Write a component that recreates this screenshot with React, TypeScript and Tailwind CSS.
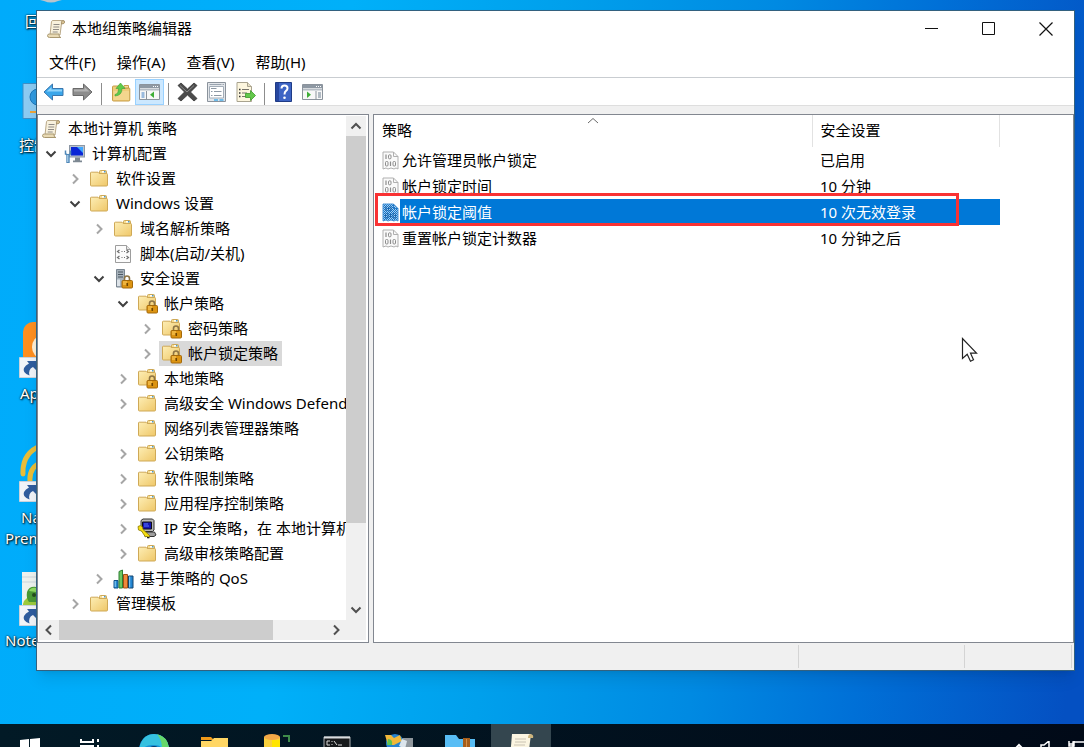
import { ReactNode } from "react"

type IconName = "scroll" | "computer" | "folder" | "lockFolder" | "script" | "server" | "ipsec" | "chart"

interface TreeNode {
  label: string
  depth: number
  icon: IconName
  state?: "open" | "closed"
  selected?: boolean
}

const tree: TreeNode[] = [
  { label: "本地计算机 策略", depth: 0, icon: "scroll" },
  { label: "计算机配置", depth: 1, icon: "computer", state: "open" },
  { label: "软件设置", depth: 2, icon: "folder", state: "closed" },
  { label: "Windows 设置", depth: 2, icon: "folder", state: "open" },
  { label: "域名解析策略", depth: 3, icon: "folder", state: "closed" },
  { label: "脚本(启动/关机)", depth: 3, icon: "script" },
  { label: "安全设置", depth: 3, icon: "server", state: "open" },
  { label: "帐户策略", depth: 4, icon: "lockFolder", state: "open" },
  { label: "密码策略", depth: 5, icon: "lockFolder", state: "closed" },
  { label: "帐户锁定策略", depth: 5, icon: "lockFolder", state: "closed", selected: true },
  { label: "本地策略", depth: 4, icon: "lockFolder", state: "closed" },
  { label: "高级安全 Windows Defender", depth: 4, icon: "folder", state: "closed" },
  { label: "网络列表管理器策略", depth: 4, icon: "folder" },
  { label: "公钥策略", depth: 4, icon: "folder", state: "closed" },
  { label: "软件限制策略", depth: 4, icon: "folder", state: "closed" },
  { label: "应用程序控制策略", depth: 4, icon: "folder", state: "closed" },
  { label: "IP 安全策略，在 本地计算机", depth: 4, icon: "ipsec", state: "closed" },
  { label: "高级审核策略配置", depth: 4, icon: "folder", state: "closed" },
  { label: "基于策略的 QoS", depth: 3, icon: "chart", state: "closed" },
  { label: "管理模板", depth: 2, icon: "folder", state: "closed" },
]

const policies = [
  { name: "允许管理员帐户锁定", value: "已启用" },
  { name: "帐户锁定时间", value: "10 分钟" },
  { name: "帐户锁定阈值", value: "10 次无效登录", selected: true },
  { name: "重置帐户锁定计数器", value: "10 分钟之后" },
]

const indents = ["pl-0", "pl-0", "pl-6", "pl-12", "pl-18", "pl-24"]

function ScrollIcon() {
  return (
    <svg width="20" height="20" viewBox="0 0 20 20">
      <path d="M5.5 2.5Q6 1.5 7 1.5H17q1.5 0 1.5 1.5t-1.5 1.5h-1.5L14 16H4z" fill="#f8f1dd" stroke="#b9a888" />
      <path d="M15.5 5q-1-3 1.5-3.5 2 .3 1.5 2-.5 1.5-3 1.5z" fill="#d9c394" stroke="#a08c64" strokeWidth=".8" />
      <path d="M1.5 16.5q0-1.500 2-1.500h9.500v1q0 2.500 2 2.500H3.500q-2 0-2-2z" fill="#e9dab4" stroke="#a99870" />
      <path d="M7.500 5.500h6M7.300 8h6M7 10.500h6M6.700 13h5" stroke="#8f8b86" strokeWidth="1" />
    </svg>
  )
}

function FolderShape() {
  return (
    <>
      <defs>
        <linearGradient id="folder" x1="0" y1="0" x2="1" y2="1">
          <stop offset="0" stopColor="#fdeeb5" />
          <stop offset="1" stopColor="#efc768" />
        </linearGradient>
      </defs>
      <path d="M10.500 4V2.500q0-1 1-1h5q1 0 1 1V5h-7z" fill="#f5dc92" stroke="#cda856" />
      <path d="M13 2.800h3" stroke="#fff" strokeWidth="1.500" />
      <path d="M15 2.800h1.500" stroke="#4a9ad4" strokeWidth="1.500" />
      <path d="M1.500 4q0-.8.8-.8H9l1.200 1.300h7.300q1 0 1 1V16q0 1-1 1h-15q-1 0-1-1z" fill="url(#folder)" stroke="#cfa957" />
    </>
  )
}

function TreeIcon({ name }: { name: IconName }) {
  if (name === "scroll") return <ScrollIcon />
  if (name === "folder") {
    return (
      <svg width="20" height="19" viewBox="0 0 20 19"><FolderShape /></svg>
    )
  }
  if (name === "lockFolder") {
    return (
      <svg width="21" height="21" viewBox="0 0 21 21">
        <FolderShape />
        <path d="M12.500 13v-2.500q0-2.500 2.500-2.500t2.500 2.500V13" fill="none" stroke="#8d7444" strokeWidth="1.600" />
        <rect x="10" y="12.500" width="10.500" height="7.500" rx="1" fill="#dc9412" stroke="#a4690a" />
        <path d="M11 14h4M11 16h3" stroke="#ffd36b" />
        <path d="M15.300 15v3" stroke="#6d4504" strokeWidth="1.500" />
      </svg>
    )
  }
  if (name === "computer") {
    return (
      <svg width="22" height="20" viewBox="0 0 22 20">
        <rect x="5.500" y="1.500" width="15" height="11.500" fill="#b9c3cf" stroke="#8c97a5" />
        <rect x="7" y="3" width="12" height="8.500" fill="#0a26d6" />
        <path d="M13 3h6v6z" fill="#3fa7ff" />
        <path d="M11 13.500h5v3h-5zM9 16.500h9v1.800H9z" fill="#7d8892" />
        <path d="M1.500 6.500v3.500l2.500 1 2.500-1V6.500" fill="none" stroke="#4f87b8" strokeWidth="1.500" />
        <path d="M4 10.500v8.500" stroke="#4f87b8" strokeWidth="3.400" />
        <path d="M3.800 11v7" stroke="#c4e2f5" />
      </svg>
    )
  }
  if (name === "script") {
    return (
      <svg width="18" height="20" viewBox="0 0 18 20">
        <path d="M1.500 1.500h11l4 4v13h-15z" fill="#fcfcfc" stroke="#9d9d9d" />
        <path d="M12.500 1.500v4h4" fill="#e5e5e5" stroke="#9d9d9d" />
        <path d="M5.500 6 3.500 7.500l2 1.500M12.500 6l2 1.500-2 1.500M7.500 7.500h1M10 7.500h1M5.500 12l-2 1.500 2 1.500M12.500 12l2 1.500-2 1.500M7.500 13.500h1M10 13.500h1" fill="none" stroke="#6f6f6f" strokeWidth="1.200" />
      </svg>
    )
  }
  if (name === "server") {
    return (
      <svg width="19" height="21" viewBox="0 0 19 21">
        <path d="M2.500 1.500h8V19h-8z" fill="#a7b2bb" stroke="#798590" />
        <path d="M4 4h5M4 6.500h5M4 9h5" stroke="#4c5863" strokeWidth="1.200" />
        <path d="M3 11.500h3V18H3z" fill="#dde3e8" />
        <path d="M10.500 13v-2.500q0-2.500 2.500-2.500t2.500 2.500V13" fill="none" stroke="#8d7444" strokeWidth="1.600" />
        <rect x="8" y="12.500" width="10.500" height="7.500" rx="1" fill="#dc9412" stroke="#a4690a" />
        <path d="M9 14h4M9 16h3" stroke="#ffd36b" />
        <path d="M13.300 15v3" stroke="#6d4504" strokeWidth="1.500" />
      </svg>
    )
  }
  if (name === "ipsec") {
    return (
      <svg width="20" height="21" viewBox="0 0 20 21">
        <path d="M4 2.500 6 1h9.500l1.500 1.500V12l-1.500 1.500H5L4 12z" fill="#b8b8b8" stroke="#333" />
        <path d="M5.500 4h9v7h-9z" fill="#1515b5" stroke="#111" />
        <path d="M7 6h4M7 8h5" stroke="#5d7aff" />
        <path d="M7 14h10.500l1.500 3-2 1.500H8z" fill="#9f9f9f" stroke="#333" />
        <path d="M1 8.500q2.500-2 4.500.5l.5 2.500 7 6.500-1.500 1.800-2-1.300-1 .5L4.500 13 1.500 12z" fill="#f5df12" stroke="#8e7a00" strokeWidth=".8" />
        <path d="M10 19.500h2.500" stroke="#222" strokeWidth="1.500" />
      </svg>
    )
  }
  return (
    <svg width="21" height="20" viewBox="0 0 21 20">
      <path d="M1 11.500h4V19H1z" fill="#2587cf" stroke="#10508a" />
      <path d="M6 2.500 9.500 1v18H6z" fill="#6cc860" stroke="#2f7f35" />
      <path d="M10.500 5.500h4V19h-4z" fill="#f0893c" stroke="#a34e12" />
      <path d="M15.500 7h4.500v12h-4.500z" fill="#2284d0" stroke="#14456e" />
      <path d="M16.700 7.500v11M2.200 12v6" stroke="#8fd0f8" />
    </svg>
  )
}

function Chevron({ dir, className }: { dir: "up" | "down" | "left" | "right"; className: string }) {
  const paths = {
    up: "M1.500 8.500 6 4l4.500 4.500",
    down: "M1.500 3.500 6 8l4.500-4.500",
    left: "M8 1.500 3.500 6 8 10.500",
    right: "M4 1.500 8.500 6 4 10.500",
  }
  return (
    <svg width="12" height="12" viewBox="0 0 12 12" className={className}>
      <path d={paths[dir]} fill="none" stroke="currentColor" strokeWidth="2" />
    </svg>
  )
}

function TreeRow({ node }: { node: TreeNode }) {
  return (
    <li className={`flex h-[25px] items-center ${indents[node.depth]}`}>
      {node.depth > 0 && (
        <button aria-label={node.label} className="flex h-full w-6 shrink-0 items-center justify-center">
          {node.state === "open" && <Chevron dir="down" className="text-[#404040]" />}
          {node.state === "closed" && <Chevron dir="right" className="text-[#a6a6a6]" />}
        </button>
      )}
      <span className={`flex h-full items-center pr-1 ${node.selected ? "bg-[#d9d9d9]" : ""}`}>
        <span className="flex w-6 shrink-0 justify-center">
          <TreeIcon name={node.icon} />
        </span>
        <span className="pb-px pl-[5px] whitespace-nowrap">{node.label}</span>
      </span>
    </li>
  )
}

function ToolButton({ label, active, children }: { label: string; active?: boolean; children: ReactNode }) {
  return (
    <button
      aria-label={label}
      className={`flex h-[26px] w-[29px] items-center justify-center ${active ? "border border-[#99d1ff] bg-[#cce8ff]" : ""}`}
    >
      {children}
    </button>
  )
}

function ToolDivider() {
  return (
    <span className="flex w-[9px] justify-center">
      <span className="h-[22px] w-px bg-[#8d8d8d]" />
    </span>
  )
}

function PaneIcon({ flip }: { flip?: boolean }) {
  return (
    <svg width="21" height="18" viewBox="0 0 21 18">
      <path d="M.500 1.500h20v15H.500z" fill="#f7f7f7" stroke="#8b939c" />
      <path d="M1 2h19v3H1z" fill="#8e98a3" />
      <path d="M14 3.500h1M16 3.500h1M18 3.500h1" stroke="#fff" />
      <path d="M1 6.500h19" stroke="#b5bcc4" strokeWidth="2" />
      {flip ? (
        <>
          <path d="M14 8v8.500" stroke="#8b939c" />
          <path d="M16 10h3M16 12h3M16 14h3" stroke="#6d7e90" />
          <path d="M5 8.500v6.500l4-3.200z" fill="#3fae37" />
        </>
      ) : (
        <>
          <path d="M7.500 8v8.500" stroke="#8b939c" />
          <path d="M2.500 10h3M2.500 12h3M2.500 14h3" stroke="#3f7fc4" />
          <path d="M15 8.500v6.500l-4-3.200z" fill="#3fae37" />
        </>
      )}
    </svg>
  )
}

function Toolbar() {
  return (
    <div className="flex h-7 items-end border-b border-[#dedede] bg-white pl-[2px]">
      <ToolButton label="后退">
        <svg width="21" height="18" viewBox="0 0 21 18">
          <path d="M1 9 9.500 1v4.500h10.500v7H9.500V17z" fill="#3aa6ea" stroke="#3a76ad" />
          <path d="M3.500 8.500 8.500 4v2.500h10.500v2z" fill="#8fd3fa" />
        </svg>
      </ToolButton>
      <ToolButton label="前进">
        <svg width="21" height="18" viewBox="0 0 21 18">
          <path d="M20 9 11.500 1v4.500H1v7h10.500V17z" fill="#8d8d8d" stroke="#6a6a6a" />
          <path d="M17.500 8.500 12.500 4v2.500H2v2z" fill="#b3b3b3" />
        </svg>
      </ToolButton>
      <ToolDivider />
      <ToolButton label="上一级">
        <svg width="20" height="20" viewBox="0 0 20 20">
          <path d="M1.500 5q0-1 1-1H8l1.500 2H18q.8 0 .8 1v11q0 1-1 1H2.500q-1 0-1-1z" fill="#efcb78" stroke="#c79d48" />
          <path d="M13 3.500h4.500V6H13z" fill="#f4dca0" stroke="#c79d48" />
          <path d="M2.500 9h15.500v9H2.500z" fill="#f4d68e" />
          <path d="M4 12.500q3.500-.5 3.500-6H5L9.500 1 14 6.500h-3q0 7-7 7.500z" fill="#5ecb4a" stroke="#3fa035" strokeWidth=".6" />
        </svg>
      </ToolButton>
      <ToolButton label="显示/隐藏控制台树" active><PaneIcon /></ToolButton>
      <ToolDivider />
      <ToolButton label="删除">
        <svg width="21" height="20" viewBox="0 0 21 20">
          <path d="M1 3.500 4 1l6.500 6L17 1l3 2.500L13.500 10l6.500 6.500-3 2.500-6.500-6L4 19l-3-2.500L7.500 10z" fill="#4b4b4b" stroke="#333" strokeWidth=".8" />
          <path d="M3 3.500 10 10l7-6.500" fill="none" stroke="#8a8a8a" />
        </svg>
      </ToolButton>
      <ToolButton label="属性">
        <svg width="19" height="20" viewBox="0 0 19 20">
          <path d="M.500.500h18v19H.500z" fill="#e3e6ea" stroke="#8b939c" />
          <path d="M2.500 4.500h14V16h-14z" fill="#fff" stroke="#a3adb8" />
          <path d="M2.500 2.500h12M15.500 2.500h1.500" stroke="#9aa4af" />
          <path d="M4 6.500h5.500M4 9.500h1.500M7 9.500h7.500M4 13.500h1.500M7 13.500h7.500" stroke="#8d98a4" />
          <path d="M7 18h4M12.500 18h4" stroke="#4aaeea" strokeWidth="1.500" />
        </svg>
      </ToolButton>
      <ToolButton label="导出列表">
        <svg width="20" height="20" viewBox="0 0 20 20">
          <path d="M1 .500h10.500l4 4v15H1z" fill="#fdf6de" stroke="#a9a38f" />
          <path d="M11.500.500v4h4" fill="#e8e0c5" stroke="#a9a38f" />
          <path d="M3 7.500h1.500M3 11h1.500M3 14.500h1.500" stroke="#333" strokeWidth="1.500" />
          <path d="M6 7.500h7M6 11h5M6 14.500h5" stroke="#77736a" strokeWidth="1.200" />
          <path d="M9.500 11.500h5V8.500l5 5-5 5v-3h-5z" fill="#64c94c" stroke="#3c9a2c" strokeWidth=".8" />
        </svg>
      </ToolButton>
      <ToolDivider />
      <ToolButton label="帮助">
        <svg width="17" height="20" viewBox="0 0 17 20">
          <path d="M.500.500h16v19H.500z" fill="#3d64c4" stroke="#1f3b86" />
          <path d="M1 1h3v18H1z" fill="#27479f" />
          <path d="M6.500 6.500q0-3 3-3t3 2.700q0 1.600-1.500 2.600T9.500 12.500" fill="none" stroke="#fff" strokeWidth="2" />
          <circle cx="9.500" cy="15.800" r="1.300" fill="#fff" />
        </svg>
      </ToolButton>
      <ToolButton label="显示/隐藏操作窗格"><PaneIcon flip /></ToolButton>
    </div>
  )
}

function TreePane() {
  return (
    <div className="flex w-[332px] shrink-0 flex-col border border-[#828790] bg-white pt-px pr-[2px] pb-[2px] pl-px">
      <div className="flex min-h-0 flex-1">
        <ul className="min-w-0 flex-1 overflow-hidden">
          {tree.map((node) => (
            <TreeRow key={node.label} node={node} />
          ))}
        </ul>
        <div className="flex w-5 shrink-0 flex-col bg-[#f0f0f0]">
          <button aria-label="向上滚动" className="flex h-5 items-center justify-center">
            <Chevron dir="up" className="text-[#505050]" />
          </button>
          <div className="flex-1">
            <div className="h-5/6 bg-[#cdcdcd]" />
          </div>
          <button aria-label="向下滚动" className="flex h-5 items-center justify-center">
            <Chevron dir="down" className="text-[#505050]" />
          </button>
        </div>
      </div>
      <div className="flex h-5 shrink-0 bg-[#f0f0f0] pr-5">
        <button aria-label="向左滚动" className="flex w-5 items-center justify-center">
          <Chevron dir="left" className="text-[#505050]" />
        </button>
        <div className="flex-1">
          <div className="h-full w-4/5 bg-[#cdcdcd]" />
        </div>
        <button aria-label="向右滚动" className="flex w-5 items-center justify-center">
          <Chevron dir="right" className="text-[#505050]" />
        </button>
      </div>
    </div>
  )
}

function PolicyIcon({ selected }: { selected?: boolean }) {
  const ink = selected ? "#1d64a8" : "#8c8c8c"
  return (
    <svg width="17" height="19" viewBox="0 0 17 19" className="shrink-0">
      <defs>
        <pattern id="dither" width="2" height="2" patternUnits="userSpaceOnUse">
          <path d="M0 0h2v2H0z" fill="#a9d0f0" />
          <path d="M0 0h1v1H0zM1 1h1v1H1z" fill="#0f72c8" />
        </pattern>
      </defs>
      <path d="M1 1h10.500l4.500 4.500V18l-2-1-2 1-3-1-3 1-2-1-3 1z" fill={selected ? "url(#dither)" : "#fafafa"} stroke={selected ? "#4a94d6" : "#b0b0b0"} />
      <path d="M11.500 1v4.500H16" fill="none" stroke={selected ? "#2a7cc7" : "#b0b0b0"} />
      <path d="M4 3.500v4.500M8.500 10.500v4.500" stroke={ink} strokeWidth="1.200" />
      <rect x="6.500" y="3.800" width="2.500" height="4" rx="1" fill="none" stroke={ink} />
      <rect x="3.500" y="10.500" width="2.500" height="4.500" rx="1" fill="none" stroke={ink} />
      <rect x="11" y="10.500" width="2.500" height="4.500" rx="1" fill="none" stroke={ink} />
    </svg>
  )
}

function PolicyPane() {
  return (
    <div className="relative min-w-0 flex-1 border border-[#828790] bg-white">
      <table className="w-[626px] table-fixed border-collapse text-left">
        <thead>
          <tr className="h-8">
            <th className="relative w-[438px] border-r border-[#e2e2e2] pb-[2px] pl-2 font-normal">
              策略
              <svg width="12" height="7" viewBox="0 0 12 7" className="absolute inset-x-0 top-[2px] mx-auto">
                <path d="M1 6l5-4.500L11 6" fill="none" stroke="#6a6a6a" />
              </svg>
            </th>
            <th className="border-r border-[#e2e2e2] pb-[2px] pl-2 font-normal">安全设置</th>
          </tr>
        </thead>
        <tbody>
          {policies.map((policy) => (
            <tr key={policy.name} className={`h-[26px] ${policy.selected ? "text-white" : ""}`}>
              <td className="p-0">
                <div className="flex h-[26px] items-center pl-2">
                  <PolicyIcon selected={policy.selected} />
                  <span className={`ml-px flex h-full flex-1 items-center pb-px pl-[2px] ${policy.selected ? "bg-[#0078d7]" : ""}`}>
                    {policy.name}
                  </span>
                </div>
              </td>
              <td className={`p-0 pb-px pl-2 ${policy.selected ? "bg-[#0078d7]" : ""}`}>{policy.value}</td>
            </tr>
          ))}
        </tbody>
      </table>
      <div className="absolute top-[78px] left-px h-[33px] w-[584px] border-3 border-[#f93233]" />
      <svg width="17" height="26" viewBox="0 0 17 26" className="absolute top-[222px] right-[95px]">
        <path d="M1.500 1.500v20l4.700-4.300 3.300 7 3-1.400-3-6.600h6z" fill="#fff" stroke="#222" strokeWidth="1.200" />
      </svg>
    </div>
  )
}

function EditorWindow() {
  return (
    <section className="absolute top-[10px] right-[9px] bottom-[53px] left-9 flex flex-col border border-[#33617f] bg-[#f0f0f0] shadow-lg">
      <header className="flex h-[35px] shrink-0 items-center bg-white">
        <span className="pl-[9px]"><ScrollIcon /></span>
        <h1 className="flex-1 pb-px pl-[6px]">本地组策略编辑器</h1>
        <button aria-label="最小化" className="flex h-full w-[57px] items-center justify-center">
          <svg width="13" height="13" viewBox="0 0 13 13"><path d="M0 6.500h13" stroke="#111" /></svg>
        </button>
        <button aria-label="最大化" className="flex h-full w-[57px] items-center justify-center">
          <svg width="13" height="13" viewBox="0 0 13 13"><path d="M.500.500h12v12H.500z" fill="none" stroke="#111" /></svg>
        </button>
        <button aria-label="关闭" className="flex h-full w-[57px] items-center justify-center">
          <svg width="14" height="14" viewBox="0 0 14 14"><path d="M.500.500l13 13M13.500.500l-13 13" stroke="#111" strokeWidth="1.200" /></svg>
        </button>
      </header>
      <nav className="flex h-8 shrink-0 items-center gap-px border-b border-[#c9cdd1] bg-white pl-[2px]">
        {["文件(F)", "操作(A)", "查看(V)", "帮助(H)"].map((item) => (
          <button key={item} className="px-[10px]">{item}</button>
        ))}
      </nav>
      <Toolbar />
      <main className="flex min-h-0 flex-1 gap-1 pt-2">
        <TreePane />
        <PolicyPane />
      </main>
      <footer className="flex h-[27px] shrink-0 py-[2px] pr-[2px]">
        <span className="flex-1 border-r border-[#d4d4d4]" />
        <span className="w-[166px] border-r border-[#d4d4d4]" />
        <span className="w-[107px] border-r border-[#d4d4d4]" />
      </footer>
    </section>
  )
}

function Shortcut() {
  return (
    <svg width="21" height="21" viewBox="0 0 21 21" className="absolute bottom-0 left-0">
      <path d="M.500.500h20v20H.500z" fill="#f1f4f8" stroke="#c9d3dd" />
      <path d="M8 4h9v9l-3-3q-5 2-3.500 8.500Q3 16 5 11q1.500-3 5-4.500z" fill="#2f5d9e" />
    </svg>
  )
}

function DesktopIcons() {
  return (
    <div className="text-white [text-shadow:1px_1px_2px_#000,0_0_2px_#000]">
      <svg width="22" height="6" viewBox="0 0 22 6" className="absolute top-0 left-10">
        <path d="M0 0h22l-4 1q-7 3-14 0z" fill="#b9c4cc" />
      </svg>
      <span className="absolute top-[11px] left-[25px]">回</span>
      <svg width="40" height="36" viewBox="0 0 40 36" className="absolute top-[83px] left-[22px]">
        <path d="M1 .500h38v35H1z" fill="#8ccbf2" stroke="#3f8fc6" />
        <circle cx="16" cy="14" r="8" fill="#2f9ae0" stroke="#1b78bd" />
        <path d="M8 29h12" stroke="#eda53a" strokeWidth="2" />
      </svg>
      <span className="absolute top-[135px] left-[19px]">控制</span>
      <div className="absolute top-[322px] left-[19px] h-[56px] w-12">
        <svg width="44" height="44" viewBox="0 0 44 44" className="absolute top-0 left-1">
          <rect width="44" height="44" rx="10" fill="#ff8f1f" />
          <ellipse cx="18" cy="25" rx="9" ry="11" fill="#fff0d6" />
        </svg>
        <Shortcut />
      </div>
      <span className="absolute top-[383px] left-[20px]">Ap</span>
      <div className="absolute top-[443px] left-[19px] h-[59px] w-12">
        <svg width="44" height="44" viewBox="0 0 44 44" className="absolute top-0 left-0">
          <path d="M4 31Q3 9 24 2M11 38q-1-14 12-19" fill="none" stroke="#e8bd38" strokeWidth="5" strokeLinecap="round" />
        </svg>
        <Shortcut />
      </div>
      <span className="absolute top-[507px] left-[21px]">Na</span>
      <span className="absolute top-[528px] left-[5px]">Prem</span>
      <div className="absolute top-[571px] left-[19px] h-[55px] w-12">
        <svg width="44" height="44" viewBox="0 0 44 44" className="absolute top-0 left-[3px]">
          <path d="M0 1h40v38H0z" fill="#edf2ee" />
          <path d="M0 6h40M0 11h40" stroke="#cbd6dc" />
          <path d="M1 33q2-8 12-8h14v14H1z" fill="#9ccb3c" />
          <path d="M5 21q2-6 9-5v15H7q-3-4-2-10z" fill="#4a9a35" />
          <path d="M7 20q2-4 7-3v4z" fill="#8fdc62" />
          <circle cx="12" cy="24" r="2" fill="#244d1e" />
        </svg>
        <Shortcut />
      </div>
      <span className="absolute top-[630px] left-[5px]">Note</span>
    </div>
  )
}

const apps: { name: string; active?: boolean; drawing: ReactNode }[] = [
  {
    name: "Edge",
    drawing: (
      <>
        <circle cx="13" cy="15" r="15" fill="#1791d6" />
        <path d="M-1 11Q3 0 13 0q13 1 15 14-1 5-7 5 2-8-8-8Q4 10-1 18z" fill="#35c1e0" />
        <path d="M16 0q11 3 12 14-1 5-8 4 3-9-4-18z" fill="#66d86a" />
        <ellipse cx="13" cy="15" rx="5" ry="3" fill="#0b3c66" />
      </>
    ),
  },
  {
    name: "文件资源管理器",
    drawing: (
      <>
        <path d="M-1 3h10l3 3h-13z" fill="#f09a1a" />
        <path d="M-1 7h10l3-3h14v20H-1z" fill="#ffd664" />
      </>
    ),
  },
  {
    name: "数据库",
    drawing: (
      <>
        <path d="M1 3h16v21H1z" fill="#f9d03e" />
        <path d="M9 6h8v18H9z" fill="#ffe500" />
        <ellipse cx="9" cy="3" rx="8" ry="3" fill="#f3a847" />
        <path d="M20 2h6v6" fill="none" stroke="#3f8b4a" strokeWidth="2" />
      </>
    ),
  },
  {
    name: "终端",
    drawing: (
      <>
        <path d="M0 3h26v21H0z" fill="#16191b" stroke="#a9adb0" />
        <path d="M0 3.500h26" stroke="#d8dcdf" strokeWidth="2" />
        <path d="M6 7H3v4h3M8 7v1M8 10v1M10 7l3 4M14 11h4" fill="none" stroke="#d8d8d8" />
      </>
    ),
  },
  {
    name: "控制面板",
    drawing: (
      <>
        <path d="M14 4h14v20H14z" fill="#8f979d" />
        <circle cx="10" cy="9" r="9" fill="#2583d0" />
        <path d="M0 1h6l3 3 6-3 2 6-8 4H3z" fill="#f1b83a" />
        <path d="M3 5q5 0 4 6H2z" fill="#5cc34f" />
        <path d="M17 5l5 2-2 8-6-3z" fill="#dce5ec" />
      </>
    ),
  },
  {
    name: "压缩文件",
    drawing: (
      <>
        <path d="M-1 1h11l3 4h16v20H-1z" fill="#58bdf5" />
        <path d="M17 4h7v20h-7z" fill="#a55d1c" />
        <path d="M20.500 5v20" stroke="#d58d45" />
      </>
    ),
  },
  {
    name: "本地组策略编辑器",
    active: true,
    drawing: (
      <>
        <path d="M5 0h19l-3 24H3z" fill="#fbf5e1" />
        <path d="M21 4q0-4 3-4 3 1 2 4z" fill="#cdb57e" />
        <path d="M8 5h11M8 8h11M7 11h11" stroke="#c9c2b2" />
      </>
    ),
  },
]

function Taskbar() {
  return (
    <footer className="flex h-[23px] shrink-0 overflow-hidden bg-linear-to-r from-[#021a26] to-[#010a18]">
      <button aria-label="开始" className="flex w-15 items-start justify-center pt-[14px]">
        <svg width="20" height="20" viewBox="0 0 20 20" className="shrink-0">
          <path d="M0 2l9-1v8H0zM10 1l10-1v9H10zM0 10h9v9l-9-1zM10 10h10v10l-10-1z" fill="#fff" />
        </svg>
      </button>
      <button aria-label="任务视图" className="mr-[5px] flex w-15 items-start justify-center pt-[14px]">
        <svg width="20" height="20" viewBox="0 0 20 20" className="shrink-0">
          <path d="M1 1v3h12V1M1 8h12v7H1zM18 1v3M18 7v12" fill="none" stroke="#fff" strokeWidth="2" />
        </svg>
      </button>
      <div className="flex flex-1 gap-px">
        {apps.map((app) => (
          <button
            key={app.name}
            aria-label={app.name}
            className={`flex w-15 items-start justify-center pt-[10px] ${app.active ? "bg-[#34464f]" : ""}`}
          >
            <svg width="28" height="24" viewBox="0 0 28 24" className="shrink-0 overflow-visible">{app.drawing}</svg>
          </button>
        ))}
      </div>
      <div className="flex items-start gap-4 pt-[17px]">
        <svg width="12" height="8" viewBox="0 0 12 8"><path d="M2 9l5-5 5 5" fill="none" stroke="#fff" strokeWidth="2" /></svg>
        <svg width="12" height="12" viewBox="0 0 12 12"><path d="M1 4h3l5-4v12L4 9H1z" fill="none" stroke="#fff" strokeWidth="1.500" /></svg>
        <svg width="16" height="12" viewBox="0 0 16 12"><path d="M16 1H5v11M1 0v5h5V0M1 3h5" fill="none" stroke="#fff" strokeWidth="1.500" /></svg>
      </div>
    </footer>
  )
}

export default function App() {
  return (
    <div className="flex h-screen flex-col overflow-hidden bg-[linear-gradient(97deg,#00abfb_0%,#00b0f9_30%,#00a0ec_48%,#008ae2_66%,#0070d7_80%,#0450c2_98%)] font-['Noto_Sans','Noto_Sans_CJK_SC',sans-serif] text-[15px] leading-5 text-black">
      <div className="relative flex-1">
        <DesktopIcons />
        <EditorWindow />
      </div>
      <Taskbar />
    </div>
  )
}
